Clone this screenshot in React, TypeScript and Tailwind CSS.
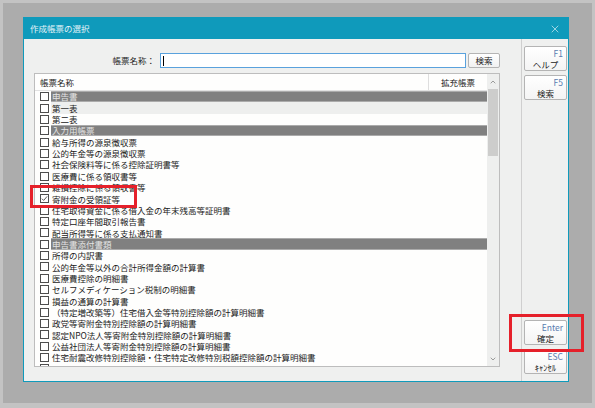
import { X, ChevronUp, ChevronDown } from 'lucide-react';

type Row = { label: string; section?: boolean; checked?: boolean; shade?: boolean };

const rows: Row[] = [
  { label: '申告書', section: true },
  { label: '第一表', shade: true },
  { label: '第二表' },
  { label: '入力用帳票', section: true },
  { label: '給与所得の源泉徴収票' },
  { label: '公的年金等の源泉徴収票' },
  { label: '社会保険料等に係る控除証明書等' },
  { label: '医療費に係る領収書等' },
  { label: '雑損控除に係る領収書等' },
  { label: '寄附金の受領証等', checked: true },
  { label: '住宅取得資金に係る借入金の年末残高等証明書' },
  { label: '特定口座年間取引報告書' },
  { label: '配当所得等に係る支払通知書' },
  { label: '申告書添付書類', section: true },
  { label: '所得の内訳書' },
  { label: '公的年金等以外の合計所得金額の計算書' },
  { label: '医療費控除の明細書' },
  { label: 'セルフメディケーション税制の明細書' },
  { label: '損益の通算の計算書' },
  { label: '（特定増改築等）住宅借入金等特別控除額の計算明細書' },
  { label: '政党等寄附金特別控除額の計算明細書' },
  { label: '認定NPO法人等寄附金特別控除額の計算明細書' },
  { label: '公益社団法人等寄附金特別控除額の計算明細書' },
  { label: '住宅耐震改修特別控除額・住宅特定改修特別税額控除額の計算明細書' },
  // next row, scrolled mostly out of view
  { label: '' },
];

function CheckBox({ checked }: { checked?: boolean }) {
  return (
    <div className="ml-[5px] flex h-[9px] w-[9px] shrink-0 items-center justify-center border border-[#4d4d4d] bg-white">
      {checked && (
        <svg viewBox="0 0 8 8" className="h-[7px] w-[7px]">
          <path d="M1 4.2 L3 6.2 L7 1.6" fill="none" stroke="#555" strokeWidth="1.1" />
        </svg>
      )}
    </div>
  );
}

function ListRow({ row }: { row: Row }) {
  const cell = row.section
    ? 'bg-[#808080] border-y border-[#ababab] text-[#e4e4e4]'
    : row.shade
      ? 'bg-[#eeefee] text-[#1a1a1a]'
      : 'text-[#1a1a1a]';
  return (
    <div className="flex h-[11.35px] shrink-0 items-center">
      <CheckBox checked={row.checked} />
      <div className={`ml-[2px] flex h-full flex-1 items-center whitespace-nowrap pl-[1px] ${cell}`}>
        {row.label}
      </div>
    </div>
  );
}

function KeyButton({ keyName, label }: { keyName: string; label: string }) {
  return (
    <div className="flex h-[25px] w-[43px] flex-col rounded-[2px] border border-[#b4b4b4] bg-gradient-to-b from-white to-[#f4f4f4]">
      <span className="self-end pr-[3px] pt-[2px] text-[8.5px] leading-none text-[#5a7db0]">{keyName}</span>
      <span className="mt-[2px] text-center text-[8.5px] leading-none text-[#222]">{label}</span>
    </div>
  );
}

export default function App() {
  return (
    <div className="relative h-[408px] w-[595px] bg-[#c3c3c3] px-[3px] pb-[5px] pt-[3px] font-['Noto_Sans_CJK_JP',sans-serif] text-[8.5px] leading-none">
      <div className="h-full bg-[#acacac] pl-[20px] pt-[14px]">
        {/* dialog window */}
        <div className="flex h-[365px] w-[546px] flex-col border border-[#0f9abb] bg-[#eff0ef]">
          <div className="flex h-[21px] shrink-0 items-center justify-between bg-[#0f9abb] pl-[6px] pr-[7px]">
            <span className="text-[8.5px] text-[#e3f3f8]">作成帳票の選択</span>
            <X size={12} strokeWidth={1.4} className="text-[#d7eef4]" />
          </div>

          <div className="flex flex-1">
            {/* left: search + list */}
            <div className="flex w-[497px] flex-col pl-[10px] pr-[21px] pt-[14px]">
              <div className="flex h-[15px] items-center justify-end">
                <span className="mr-[5px] text-[#222]">帳票名称：</span>
                <div className="flex h-[15px] w-[306px] items-center border border-[#5aa2dd] bg-white pl-[2px]">
                  <div className="h-[10px] w-px bg-black" />
                </div>
                <div className="ml-[2px] flex h-[15px] w-[32px] items-center justify-center rounded-[2px] border border-[#b4b4b4] bg-gradient-to-b from-white to-[#f1f1f1] text-[#222]">
                  検索
                </div>
              </div>

              <div className="mt-[5px] flex h-[294px] border border-[#bdbdbd] bg-[#fefefd]">
                <div className="flex w-[452px] flex-col">
                  <div className="flex h-[17px] shrink-0 items-center border-b border-[#e2e2e2]">
                    <span className="flex-1 pl-[5px] text-[#222]">帳票名称</span>
                    <span className="flex h-full w-[59px] items-center justify-center border-l border-[#dedede] text-[#222]">
                      拡充帳票
                    </span>
                  </div>
                  <div className="flex flex-1 flex-col overflow-hidden">
                    {rows.map((r, i) => (
                      <ListRow key={i} row={r} />
                    ))}
                  </div>
                </div>
                {/* scrollbar */}
                <div className="flex w-[12px] flex-col bg-[#eeefee]">
                  <div className="flex h-[15px] items-center justify-center">
                    <ChevronUp size={8} strokeWidth={2} className="text-[#707070]" />
                  </div>
                  <div className="mx-[1px] h-[67px] bg-[#cdcdcc]" />
                  <div className="flex-1" />
                  <div className="flex h-[14px] items-center justify-center">
                    <ChevronDown size={8} strokeWidth={2} className="text-[#707070]" />
                  </div>
                </div>
              </div>
            </div>

            {/* right: function key buttons */}
            <div className="flex flex-1 flex-col justify-between border-l border-[#cfcfcf] pb-[7px] pl-[2px] pt-[7px]">
              <div className="flex flex-col gap-[4px]">
                <KeyButton keyName="F1" label="ヘルプ" />
                <KeyButton keyName="F5" label="検索" />
              </div>
              <div className="flex flex-col gap-[4px]">
                <KeyButton keyName="Enter" label="確定" />
                <KeyButton keyName="ESC" label="ｷｬﾝｾﾙ" />
              </div>
            </div>
          </div>
        </div>
      </div>

      {/* highlight frames */}
      <div className="absolute left-[30px] top-[185px] h-[23px] w-[107px] border-[3px] border-[#e5202a]" />
      <div className="absolute left-[509px] top-[314px] h-[38px] w-[75px] border-[3px] border-[#e5202a]" />
    </div>
  );
}
